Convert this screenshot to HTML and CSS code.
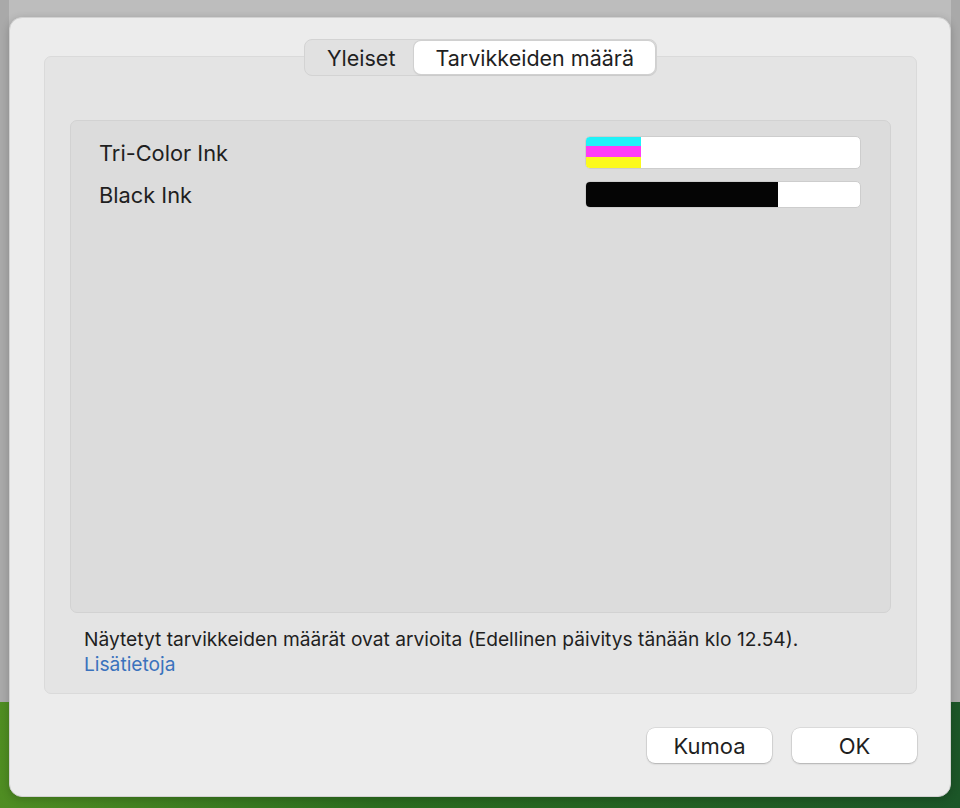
FILE: index.html
```html
<!DOCTYPE html>
<html lang="fi">

<head>
  <title>Tarvikkeiden määrä</title>
  <link rel="stylesheet" href="styles.css">
</head>

<body>
  <div class="sheet">
    <div class="tabs">
      <div class="tab">Yleiset</div>
      <div class="tab selected">Tarvikkeiden määrä</div>
    </div>

    <div class="group">
      <div class="levels">
        <div class="supply">
          <span class="name">Tri-Color Ink</span>
          <div class="meter tall">
            <div class="fill tricolor" style="width: 20%"></div>
          </div>
        </div>
        <div class="supply">
          <span class="name">Black Ink</span>
          <div class="meter">
            <div class="fill black" style="width: 70%"></div>
          </div>
        </div>
      </div>

      <p class="note">Näytetyt tarvikkeiden määrät ovat arvioita (Edellinen päivitys tänään klo 12.54).<br>
        <a href="#">Lisätietoja</a>
      </p>
    </div>

    <div class="buttons">
      <button>Kumoa</button>
      <button>OK</button>
    </div>
  </div>
</body>

</html>
```

FILE: styles.css
```css
html,
body {
  margin: 0;
  height: 100%;
  overflow: hidden;
}

body {
  padding: 17px 9px 0;
  box-sizing: border-box;
  background:
    linear-gradient(to right, #4f8d22, #2b6d1f 40%, #1c5628) bottom / 100% 106px no-repeat,
    linear-gradient(to right, #a9a9a9 0 9px, #bdbdbd 9px 951px, #a9a9a9 951px);
  font-family: Inter, "Noto Sans", sans-serif;
  color: #1f1f1f;
}

.sheet {
  height: 780px;
  box-sizing: border-box;
  padding: 21px 33px 0 34px;
  background: #ececec;
  border: 1px solid #d2d2d2;
  border-radius: 13px;
  box-shadow: 0 2px 8px #0003;
  display: flex;
  flex-direction: column;
}

.tabs {
  align-self: center;
  position: relative;
  z-index: 1;
  display: flex;
  height: 37px;
  box-sizing: border-box;
  padding: 1px;
  background: #e1e1e1;
  border: 1px solid #d3d3d3;
  border-radius: 8px;
  font-size: 21.5px;
  margin-bottom: -20px;
}

.tab {
  display: flex;
  align-items: center;
  padding: 0 19px 0 21px;
  border-radius: 7px;
}

.tab.selected {
  background: white;
  padding: 0 21px;
  box-shadow: 0 0 0 1px #d0d0d0, 0 1px 2px #0002;
}

.group {
  height: 638px;
  box-sizing: border-box;
  padding: 63px 25px 0;
  background: #e4e4e4;
  border: 1px solid #dadada;
  border-radius: 7px;
}

.levels {
  height: 493px;
  box-sizing: border-box;
  padding: 10px 29px 0 28px;
  background: #dcdcdc;
  border: 1px solid #d2d2d2;
  border-radius: 7px;
}

.supply {
  display: flex;
  align-items: center;
  justify-content: space-between;
  height: 42px;
  font-size: 21.8px;
}

.supply .name {
  position: relative;
  top: 1px;
}

.meter {
  width: 276px;
  height: 27px;
  background: white;
  border: 1px solid #cdcdcd;
  border-radius: 5px;
  overflow: hidden;
  box-sizing: border-box;
}

.meter.tall {
  height: 33px;
}

.fill {
  height: 100%;
}

.fill.tricolor {
  background: linear-gradient(#20f2f8 0 30%, #ff3cf6 30% 64%, #fcfa1c 64%);
}

.fill.black {
  background: #050505;
}

.note {
  margin: 14px 0 0 14px;
  font-size: 19.2px;
  line-height: 25px;
}

.note a {
  color: #3a72bd;
  text-decoration: none;
}

.buttons {
  display: flex;
  justify-content: flex-end;
  gap: 20px;
  margin-top: 34px;
}

.buttons button {
  width: 125px;
  height: 35px;
  background: white;
  border: none;
  border-radius: 8px;
  box-shadow: 0 0 0 0.5px #0002, 0 1px 2px #0003;
  font-family: inherit;
  font-size: 22px;
  color: #1f1f1f;
}
```
